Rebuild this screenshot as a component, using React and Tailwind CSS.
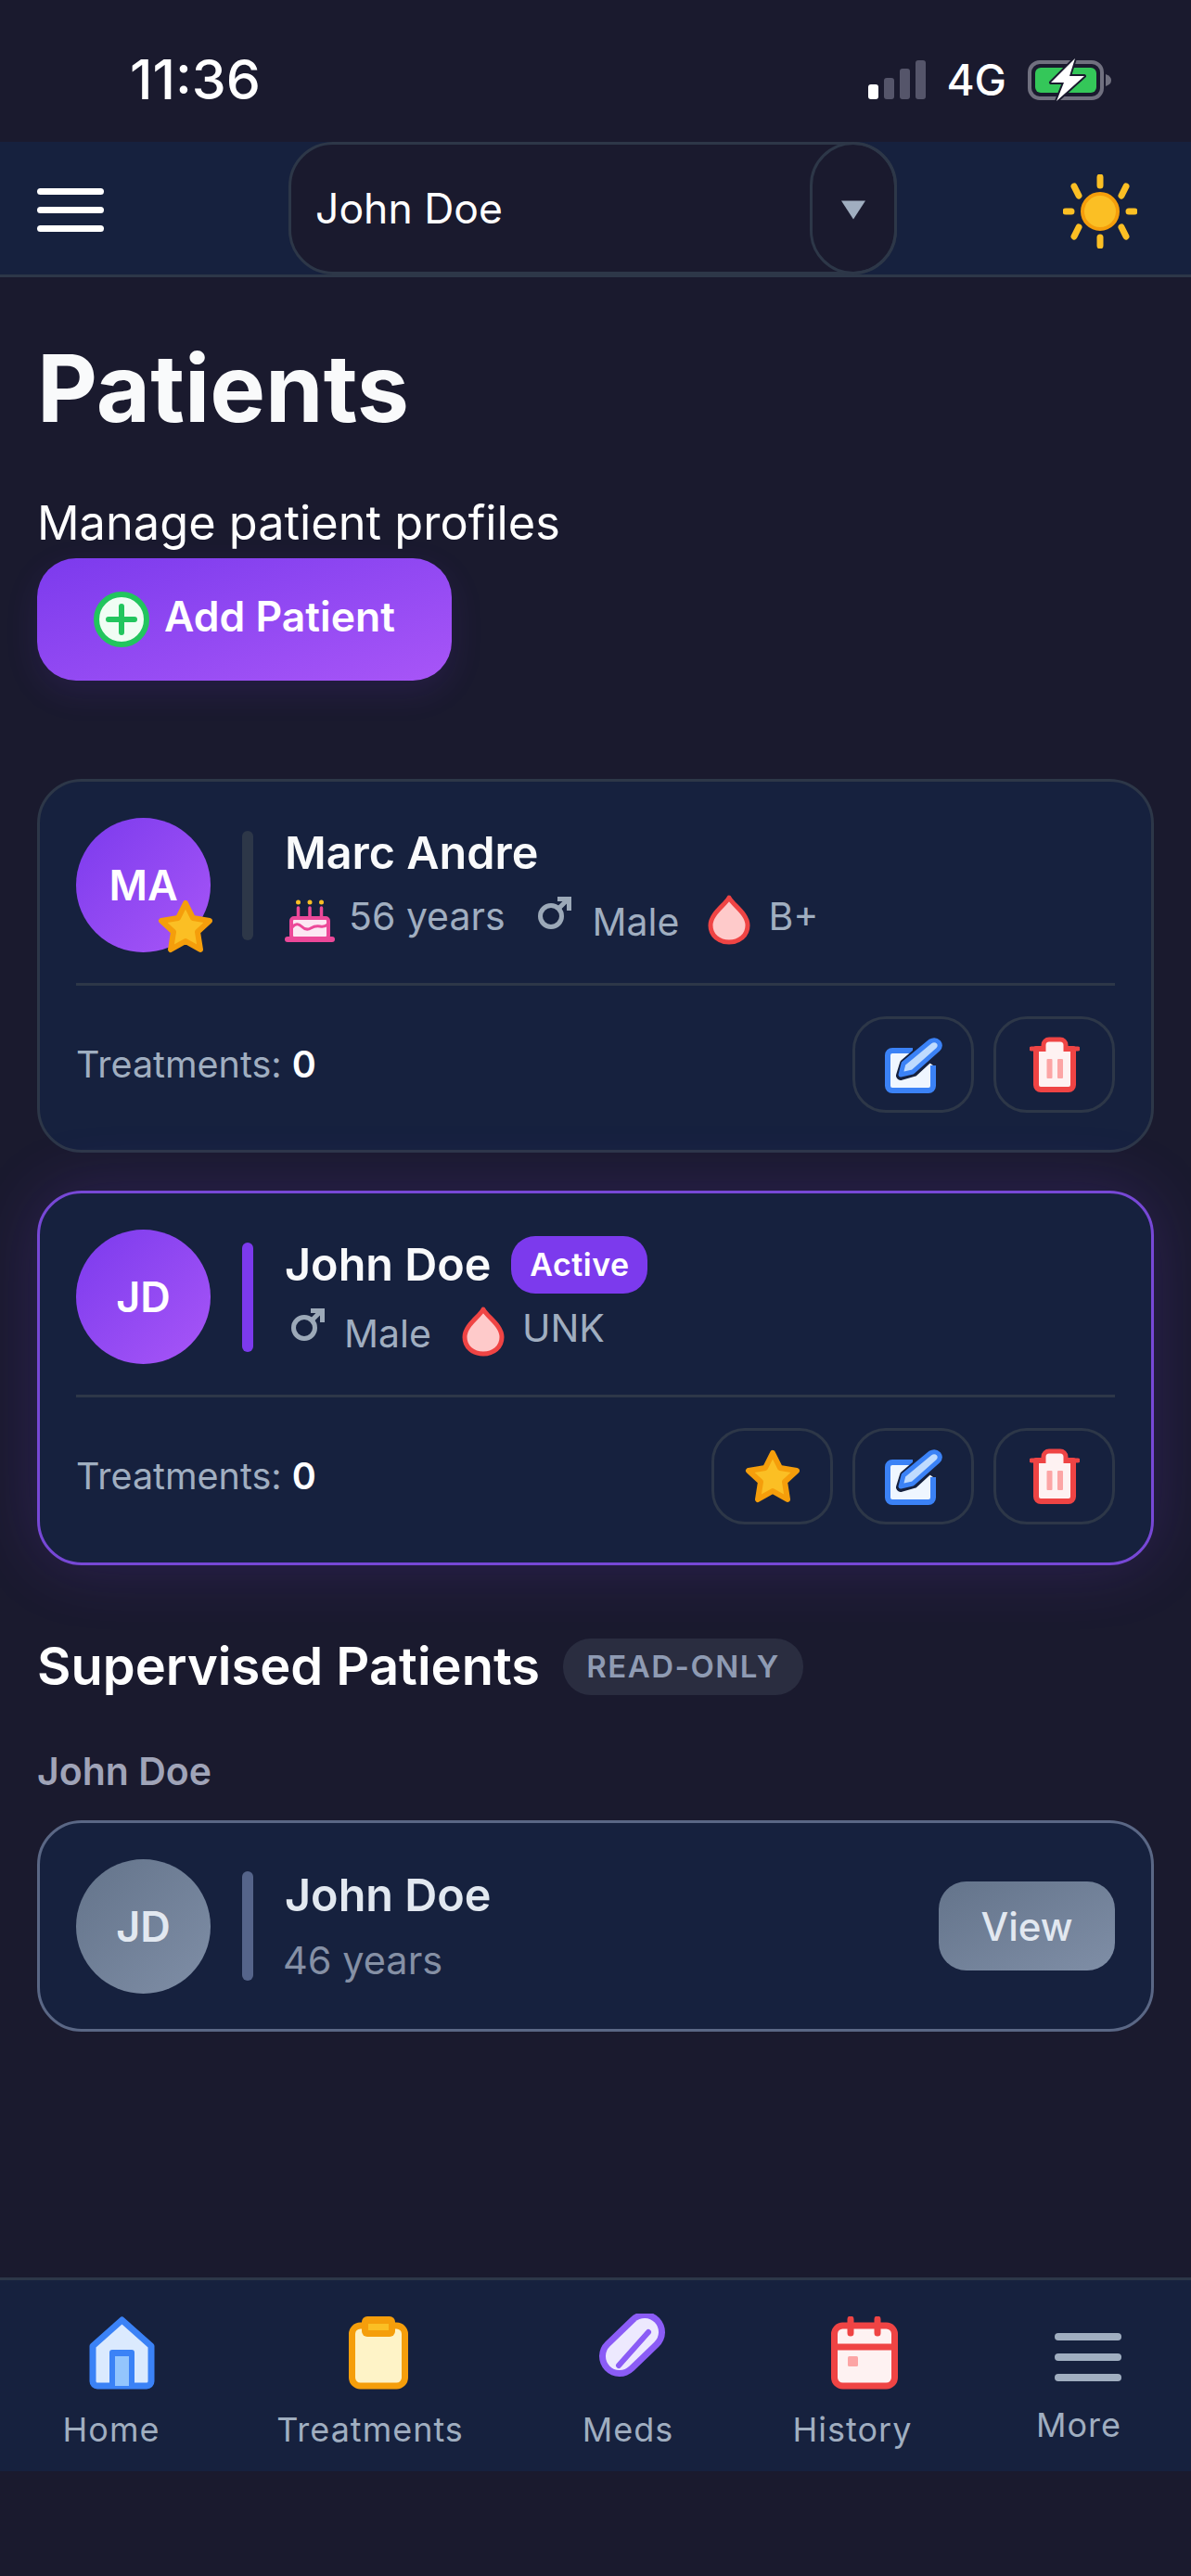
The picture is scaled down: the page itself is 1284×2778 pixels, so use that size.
import React from "react";

const Star = ({ className }) => (
  <svg viewBox="0 0 62 58" className={className}>
    <path d="M31 4 L39 20 L57 23 L44 35 L47 54 L31 45 L15 54 L18 35 L5 23 L23 20 Z" fill="#fbbf24" stroke="#f59e0b" strokeWidth="6" strokeLinejoin="round" />
  </svg>
);

const Edit = () => (
  <svg viewBox="0 0 62 61" className="w-[62px] h-[61px]">
    <path d="M30 15 H8 a5 5 0 0 0 -5 5 V53 a5 5 0 0 0 5 5 H47 a5 5 0 0 0 5 -5 V31" fill="#eff6ff" stroke="#3b82f6" strokeWidth="6" strokeLinejoin="round" />
    <path d="M17 42 L21 29 L48 6 Q54 2 58 6 Q61 10 57 14 L31 38 Z" fill="#3b82f6" stroke="#16213e" strokeWidth="10" strokeLinejoin="round" />
    <path d="M17 41 L20 29 L49 5 Q54 2 58 6 Q61 10 57 14 L30 38 Z" fill="#bfdbfe" stroke="#3b82f6" strokeWidth="5" strokeLinejoin="round" />
  </svg>
);

const Trash = () => (
  <svg viewBox="0 0 54 60" className="w-[54px] h-[60px]">
    <path d="M7 13 H47 V52 a5 5 0 0 1 -5 5 H12 a5 5 0 0 1 -5 -5 Z" fill="#fef2f2" stroke="#ef4444" strokeWidth="6" strokeLinejoin="round" />
    <path d="M2 13 H52" stroke="#ef4444" strokeWidth="5" strokeLinecap="round" />
    <path d="M15 16 V9 a6 6 0 0 1 6 -6 H33 a6 6 0 0 1 6 6 V16" fill="#fef2f2" stroke="#ef4444" strokeWidth="5" />
    <rect x="18.500" y="24" width="6" height="21" rx="1" fill="#fca5a5" />
    <rect x="30" y="24" width="6" height="21" rx="1" fill="#fca5a5" />
  </svg>
);

const Cake = ({ className }) => (
  <svg viewBox="0 0 54 46" className={className}>
    <circle cx="14.500" cy="3" r="2.500" fill="#fbbf24" />
    <circle cx="27" cy="3" r="2.500" fill="#fbbf24" />
    <circle cx="39.500" cy="3" r="2.500" fill="#fbbf24" />
    <path d="M14.500 9 V20 M27 9 V20 M39.500 9 V20" stroke="#ec4899" strokeWidth="3.500" strokeLinecap="round" />
    <rect x="7" y="20" width="40" height="22" rx="3" fill="#fce7f3" stroke="#ec4899" strokeWidth="4" />
    <path d="M8 30 Q13 24 18 29 T28 31 T38 29 T46 27" fill="none" stroke="#ec4899" strokeWidth="3" />
    <rect x="0" y="40" width="54" height="6" rx="3" fill="#ec4899" />
  </svg>
);

const Male = ({ className }) => (
  <svg viewBox="0 0 36 35" className={className} fill="none" stroke="#9ca9b8" strokeWidth="5">
    <circle cx="14" cy="21" r="11.500" />
    <path d="M22 13 L33 2 M21 2.500 H33.500 V15" />
  </svg>
);

const Drop = ({ className }) => (
  <svg viewBox="0 0 46 54" className={className}>
    <path d="M23 3 C27 11 43 20 43 33 C43 44 34 51 23 51 C12 51 3 44 3 33 C3 20 19 11 23 3 Z" fill="#fecaca" stroke="#ef4444" strokeWidth="5" strokeLinejoin="round" />
  </svg>
);

const Sun = () => (
  <svg viewBox="0 0 80 80" className="w-[80px] h-[80px]">
    <circle cx="40" cy="40" r="19" fill="#fbbf24" stroke="#f59e0b" strokeWidth="4" />
    <g stroke="#fbbf24" strokeWidth="7" strokeLinecap="round">
      <path d="M40 3 V12 M40 68 V77 M3 40 H9 M71 40 H77" />
      <path d="M12 13 L17 23 M68 13 L63 23 M12 67 L17 57 M68 67 L63 57" />
    </g>
  </svg>
);

const Home = () => (
  <svg viewBox="0 0 71 79" className="w-[71px] h-[79px]">
    <path d="M35.500 4 L67 32 V70 a5 5 0 0 1 -5 5 H9 a5 5 0 0 1 -5 -5 V32 Z" fill="#dbeafe" stroke="#3b82f6" strokeWidth="7" strokeLinejoin="round" />
    <path d="M22 76 V39 a3 3 0 0 1 3 -3 H46 a3 3 0 0 1 3 3 V76 Z" fill="#3b82f6" />
    <rect x="28" y="43" width="15" height="32" fill="#93c5fd" />
  </svg>
);

const Clipboard = () => (
  <svg viewBox="0 0 64 79" className="w-[64px] h-[79px]">
    <rect x="3.500" y="10" width="57" height="65" rx="9" fill="#fef3c7" stroke="#f59e0b" strokeWidth="7" />
    <rect x="14" y="0" width="36" height="22" rx="6" fill="#f59e0b" />
    <rect x="21" y="8" width="22" height="7" fill="#fbbf24" />
  </svg>
);

const Pill = () => (
  <svg viewBox="0 0 71 68" className="w-[71px] h-[68px]">
    <path d="M22 46 L49 20" stroke="#8b5cf6" strokeWidth="44" strokeLinecap="round" />
    <path d="M22 46 L49 20" stroke="#ede9fe" strokeWidth="30" strokeLinecap="round" />
    <path d="M21 56 L53 20" stroke="#8b5cf6" strokeWidth="6" strokeLinecap="round" />
  </svg>
);

const Calendar = () => (
  <svg viewBox="0 0 72 79" className="w-[72px] h-[79px]">
    <rect x="3.500" y="10" width="65" height="65" rx="9" fill="#fef2f2" stroke="#ef4444" strokeWidth="7" />
    <path d="M3 33 H69" stroke="#ef4444" strokeWidth="7" />
    <path d="M21 3 V18 M50 3 V18" stroke="#ef4444" strokeWidth="7" strokeLinecap="round" />
    <rect x="18" y="43" width="11" height="11" rx="1.500" fill="#fca5a5" />
  </svg>
);

const ActionButton = ({ children }) => (
  <button className="w-[131px] h-[104px] flex items-center justify-center rounded-[36px] border-[3px] border-[#2d3748] bg-transparent">
    {children}
  </button>
);

const Footer = ({ star }) => (
  <div className="flex items-center justify-between pt-[33px]">
    <div className="text-[39.500px] leading-[48px] text-[#a0aec0]">
      Treatments: <span className="font-semibold text-white">0</span>
    </div>
    <div className="flex gap-[21px]">
      {star && (
        <ActionButton>
          <Star className="w-[62px] h-[58px]" />
        </ActionButton>
      )}
      <ActionButton>
        <Edit />
      </ActionButton>
      <ActionButton>
        <Trash />
      </ActionButton>
    </div>
  </div>
);

const Avatar = ({ text, star }) => (
  <div className="relative w-[145px] h-[145px] shrink-0 rounded-full bg-gradient-to-br from-[#7c3aed] to-[#a855f7] flex items-center justify-center text-[45px] font-semibold text-white">
    {text}
    {star && <Star className="absolute left-[87px] top-[88px] w-[62px] h-[58px]" />}
  </div>
);

const MetaText = ({ className, children }) => (
  <span className={"text-[41px] leading-[50px] text-[#a0aec0] " + className}>{children}</span>
);

export default function App() {
  return (
    <div className="w-[1284px] h-[2778px] bg-[#1a1a2e] flex flex-col font-['Inter',sans-serif] text-white overflow-hidden">
      {/* status bar */}
      <div className="h-[153px] shrink-0 flex items-center pl-[140px]">
        <span className="text-[59px] leading-[64px] font-medium mt-[18px]">11:36</span>
        <div className="ml-auto flex items-center mt-[18px] pr-[85px]">
          <div className="flex items-end gap-[6px] h-[42px]">
            <div className="w-[11px] h-[16px] rounded-[3px] bg-white" />
            <div className="w-[11px] h-[23px] rounded-[3px] bg-[#55556a]" />
            <div className="w-[11px] h-[33px] rounded-[3px] bg-[#55556a]" />
            <div className="w-[11px] h-[42px] rounded-[3px] bg-[#55556a]" />
          </div>
          <span className="ml-[22px] text-[46px] leading-[50px] font-medium">4G</span>
          <svg viewBox="0 0 92 48" className="ml-[22px] w-[92px] h-[48px]">
            <rect x="3" y="5" width="78" height="39" rx="11" fill="none" stroke="#70707f" strokeWidth="4" />
            <rect x="9" y="11" width="66" height="27" rx="6" fill="#34c759" />
            <path d="M85 18 q6 2 6 6.500 q0 4.500 -6 6.500 Z" fill="#70707f" />
            <path d="M52 1 L26 27 H40 L32 47 L62 20 H46 Z" fill="#fff" stroke="#1a1a2e" strokeWidth="4" strokeLinejoin="round" paintOrder="stroke" />
          </svg>
        </div>
      </div>

      {/* header */}
      <div className="h-[146px] shrink-0 bg-[#16213e] border-b-[3px] border-[#2d3748] flex pl-[40px] pr-[58px]">
        <div className="flex flex-col justify-center gap-[13px] w-[72px] self-center mt-[3px]">
          <div className="h-[7px] rounded-full bg-white" />
          <div className="h-[7px] rounded-full bg-white" />
          <div className="h-[7px] rounded-full bg-white" />
        </div>
        <div className="ml-[199px] w-[656px] flex rounded-[48px] border-[3px] border-[#2d3748] bg-[#1a1a2e]">
          <div className="flex-1 flex items-center pl-[26px] pt-[2px] text-[44.500px]">John Doe</div>
          <div className="w-[94px] -my-[3px] -mr-[3px] rounded-[48px] border-[3px] border-[#2d3748] flex items-center justify-center pt-[3px]">
            <svg viewBox="0 0 26 20" className="w-[26px] h-[21px]">
              <path d="M0 0 H26 L13 20 Z" fill="#a0aec0" />
            </svg>
          </div>
        </div>
        <div className="ml-auto self-center mt-[6px]">
          <Sun />
        </div>
      </div>

      {/* main */}
      <div className="flex-1 px-[40px] pt-[60px]">
        <h1 className="text-[100.500px] leading-[120px] font-bold text-[#f9fafb]">Patients</h1>
        <p className="mt-[51px] text-[50.500px] leading-[68px] h-[72px] text-white">Manage patient profiles</p>
        <button className="w-[447px] h-[132px] flex items-center pl-[61px] rounded-[42px] bg-gradient-to-br from-[#7c3aed] to-[#a855f7] shadow-[0_12px_36px_rgba(124,58,237,0.12)]">
          <svg viewBox="0 0 60 60" className="w-[60px] h-[60px]">
            <circle cx="30" cy="30" r="27" fill="#f0fdf4" stroke="#22c55e" strokeWidth="6" />
            <path d="M30 16 V44 M16 30 H44" stroke="#22c55e" strokeWidth="6" strokeLinecap="round" />
          </svg>
          <span className="ml-[16px] mt-[-6px] text-[44.500px] leading-[54px] font-semibold text-white">Add Patient</span>
        </button>

        {/* card 1 */}
        <div className="mt-[106px] h-[403px] rounded-[48px] border-[3px] border-[#2d3748] bg-[#16213e] px-[39px] pt-[39px]">
          <div className="flex items-center h-[145px] border-b-0">
            <Avatar text="MA" star />
            <div className="ml-[34px] w-[12px] h-[118px] rounded-full bg-[#2d3748]" />
            <div className="ml-[34px] flex flex-col">
              <div className="h-[60px] text-[48.500px] leading-[60px] font-semibold text-[#f9fafb]">Marc Andre</div>
              <div className="h-[70px] flex items-start">
                <Cake className="mt-[20px] w-[54px] h-[46px]" />
                <MetaText className="ml-[15px] mt-[13px]">56 years</MetaText>
                <Male className="ml-[35px] mt-[17px] w-[36px] h-[35px]" />
                <MetaText className="ml-[23px] mt-[19px]">Male</MetaText>
                <Drop className="ml-[31px] mt-[15px] w-[46px] h-[54px]" />
                <MetaText className="ml-[19px] mt-[13px]">B+</MetaText>
              </div>
            </div>
          </div>
          <div className="mt-[33px] h-[3px] bg-[#2d3748]" />
          <Footer />
        </div>

        {/* card 2 */}
        <div className="mt-[41px] h-[404px] rounded-[48px] border-[3px] border-[#7748d6] bg-[#16213e] px-[39px] pt-[39px] shadow-[0_0_72px_rgba(124,58,237,0.2)]">
          <div className="flex items-center h-[145px]">
            <Avatar text="JD" />
            <div className="ml-[34px] w-[12px] h-[118px] rounded-full bg-[#7c3aed]" />
            <div className="ml-[34px] flex flex-col">
              <div className="h-[60px] flex items-center text-[48.500px] leading-[60px] font-semibold text-[#f9fafb]">
                John Doe
                <span className="ml-[22px] h-[62px] w-[147px] flex items-center justify-center rounded-[26px] bg-[#7c3aed] text-[34px] leading-[40px] font-semibold text-white tracking-[0.5px]">Active</span>
              </div>
              <div className="h-[70px] flex items-start">
                <Male className="ml-[7px] mt-[17px] w-[36px] h-[35px]" />
                <MetaText className="ml-[21px] mt-[19px]">Male</MetaText>
                <Drop className="ml-[33px] mt-[15px] w-[46px] h-[54px]" />
                <MetaText className="ml-[19px] mt-[13px]">UNK</MetaText>
              </div>
            </div>
          </div>
          <div className="mt-[33px] h-[3px] bg-[#2d3748]" />
          <Footer star />
        </div>

        {/* supervised */}
        <div className="mt-[79px] h-[61px] flex items-center">
          <h2 className="text-[56px] leading-[61px] font-semibold text-white">Supervised Patients</h2>
          <span className="ml-[25px] w-[259px] h-[61px] flex items-center justify-center rounded-[30px] bg-[#2a2d40] text-[33px] font-semibold tracking-[1.5px] text-[#8f9bb3]">READ-ONLY</span>
        </div>
        <div className="mt-[57px] text-[41px] leading-[50px] font-semibold text-[#a0a4b8]">John Doe</div>
        <div className="mt-[28px] h-[228px] rounded-[48px] border-[3px] border-[#5a6785] bg-[#16213e] px-[39px] pt-[39px] flex items-start">
          <div className="w-[145px] h-[145px] shrink-0 rounded-full bg-gradient-to-br from-[#64748b] to-[#7f8ea6] flex items-center justify-center text-[45px] font-semibold text-[#e2e8f0]">JD</div>
          <div className="ml-[34px] mt-[13px] w-[12px] h-[118px] rounded-full bg-[#55648a]" />
          <div className="ml-[34px] mt-[9px] flex flex-col">
            <div className="text-[48.500px] leading-[60px] font-semibold text-[#e2e8f0]">John Doe</div>
            <div className="mt-[15px] -ml-[2px] text-[41.500px] leading-[50px] text-[#8590a5]">46 years</div>
          </div>
          <button className="ml-auto mt-[24px] w-[190px] h-[96px] rounded-[30px] bg-gradient-to-br from-[#64748b] to-[#7f8ea6] text-[42px] font-medium text-[#e2e8f0]">View</button>
        </div>
      </div>

      {/* bottom nav */}
      <div className="h-[209px] shrink-0 bg-[#16213e] border-t-[3px] border-[#2d3748] grid grid-cols-[240px_318px_238px_246px_242px] mb-[113px]">
        <div className="flex flex-col items-center pt-[39px]">
          <div className="ml-[22px] flex"><Home /></div>
          <span className="mt-[21px] text-[36px] leading-[44px] tracking-[1px] text-[#a0aec0]">Home</span>
        </div>
        <div className="flex flex-col items-center pt-[39px]">
          <div className="ml-[18px] flex"><Clipboard /></div>
          <span className="mt-[21px] text-[36px] leading-[44px] tracking-[1px] text-[#a0aec0]">Treatments</span>
        </div>
        <div className="flex flex-col items-center pt-[36px]">
          <div className="ml-[9px] flex"><Pill /></div>
          <span className="mt-[35px] text-[36px] leading-[44px] tracking-[1px] text-[#a0aec0]">Meds</span>
        </div>
        <div className="flex flex-col items-center pt-[39px]">
          <div className="ml-[26px] flex"><Calendar /></div>
          <span className="mt-[21px] text-[36px] leading-[44px] tracking-[1px] text-[#a0aec0]">History</span>
        </div>
        <div className="flex flex-col items-center pt-[57px]">
          <div className="ml-[19px] w-[72px] flex flex-col gap-[14px]">
            <div className="h-[8px] rounded-full bg-[#a0aec0]" />
            <div className="h-[8px] rounded-full bg-[#a0aec0]" />
            <div className="h-[8px] rounded-full bg-[#a0aec0]" />
          </div>
          <span className="mt-[25px] text-[36px] leading-[44px] tracking-[1px] text-[#a0aec0]">More</span>
        </div>
      </div>
    </div>
  );
}
